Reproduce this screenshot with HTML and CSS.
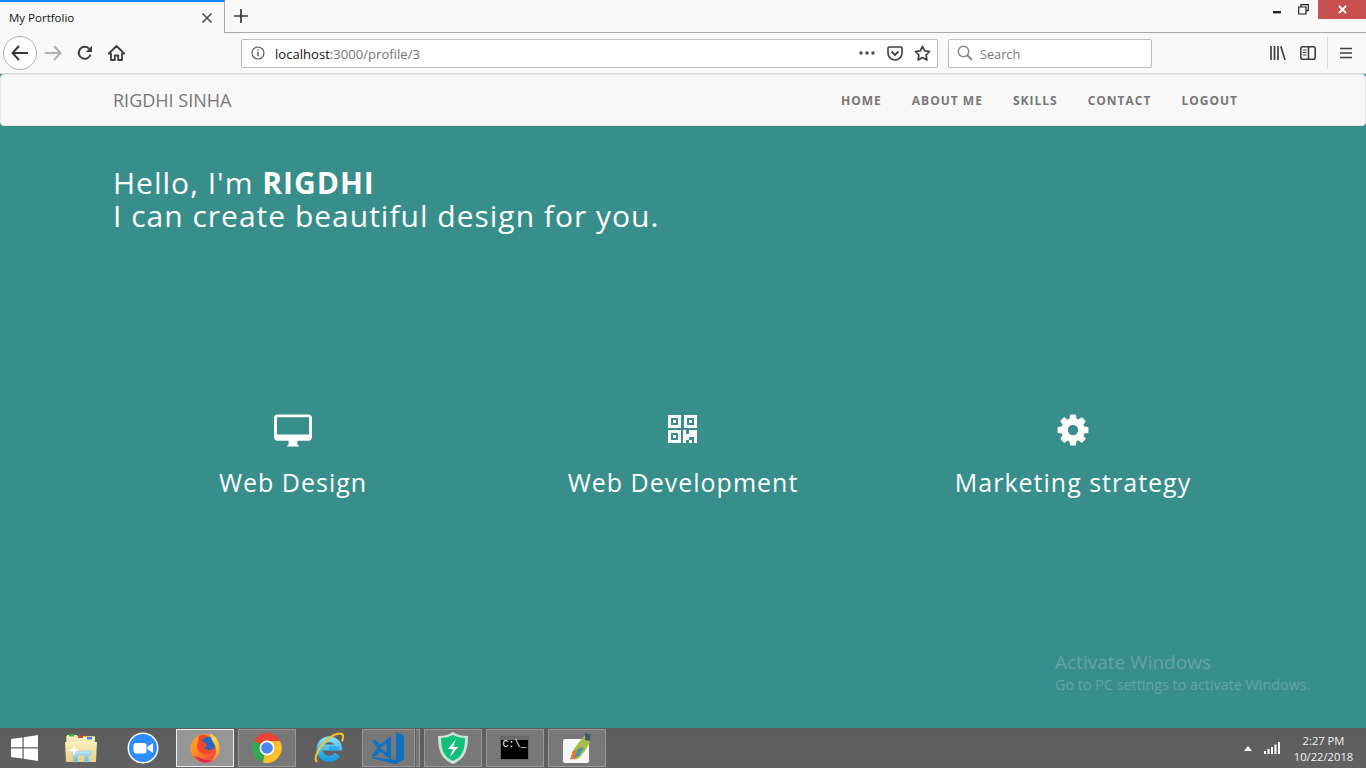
FILE: index.html
```html
<!DOCTYPE html>
<html lang="en">
<head>
  <meta charset="UTF-8" />
  <meta name="viewport" content="width=device-width, initial-scale=1.0" />
  <title>My Portfolio</title>
  <link rel="stylesheet" href="styles.css">
</head>
<body>
  <div class="browser">
    <div class="tabstrip">
      <div class="tab">
        <span class="tab-title">My Portfolio</span>
        <svg class="tab-close" width="12" height="12" viewBox="0 0 12 12"><path d="M1.5 1.5l9 9M10.5 1.5l-9 9" stroke="#4a4a4f" stroke-width="1.6"/></svg>
      </div>
      <div class="newtab">
        <svg width="14" height="14" viewBox="0 0 14 14"><path d="M7 0v14M0 7h14" stroke="#38383d" stroke-width="1.7"/></svg>
      </div>
      <div class="winctl">
        <div class="winbtn"><svg width="10" height="10" viewBox="0 0 10 10"><rect x="1" y="6" width="8" height="2.4" fill="#222"/></svg></div>
        <div class="winbtn"><svg width="11" height="11" viewBox="0 0 11 11"><path d="M3 2.5V.7h7.3v6H8M.7 3h7.3v7H.7z" fill="none" stroke="#222" stroke-width="1.2"/></svg></div>
        <div class="winclose"><svg width="9" height="9" viewBox="0 0 9 9"><path d="M1 1l7 7M8 1l-7 7" stroke="#fff" stroke-width="1.8"/></svg></div>
      </div>
    </div>
    <div class="toolbar">
      <div class="back">
        <svg width="18" height="16" viewBox="0 0 18 16"><path d="M8 1L1.5 8 8 15M2 8h15" fill="none" stroke="#3a3a3e" stroke-width="2"/></svg>
      </div>
      <svg class="fwd" width="18" height="16" viewBox="0 0 18 16"><path d="M10 1l6.500 7-6.500 7M16 8H1" fill="none" stroke="#b1b1b3" stroke-width="2"/></svg>
      <svg class="reload" width="16" height="16" viewBox="0 0 16 16"><path d="M13.500 9.500A6 6 0 1 1 12 3.600" fill="none" stroke="#3f3f43" stroke-width="2"/><path d="M15 .8v6.200H8.800z" fill="#3f3f43"/></svg>
      <svg class="home" width="17" height="16" viewBox="0 0 17 16"><path d="M8.500 1L.8 8.500h2.200V15h3.800v-4.500h3.400V15H14V8.500h2.200z" fill="none" stroke="#3f3f43" stroke-width="1.800" stroke-linejoin="round"/></svg>
      <div class="urlbar">
        <svg width="14" height="14" viewBox="0 0 14 14"><circle cx="7" cy="7" r="6" fill="none" stroke="#55555a" stroke-width="1.100"/><path d="M7 6v4.200M7 3.500v1.300" stroke="#55555a" stroke-width="1.400"/></svg>
        <span class="url"><span class="url-host">localhost</span>:3000/profile/3</span>
        <svg class="dots" width="16" height="4" viewBox="0 0 16 4"><circle cx="2" cy="2" r="1.700"/><circle cx="8" cy="2" r="1.700"/><circle cx="14" cy="2" r="1.700"/></svg>
        <svg class="pocket" width="16" height="15" viewBox="0 0 16 15"><path d="M1 2.300C1 1.500 1.500 1 2.300 1h11.400c.8 0 1.300.5 1.300 1.300V7c0 3.800-3.200 7-7 7s-7-3.200-7-7z" fill="none" stroke="#3f3f43" stroke-width="1.600"/><path d="M4.500 5.500L8 9l3.500-3.500" fill="none" stroke="#3f3f43" stroke-width="1.800"/></svg>
        <svg class="star" width="17" height="16" viewBox="0 0 17 16"><path d="M8.500 1.300l2.200 4.500 4.900.7-3.500 3.500.8 4.900-4.400-2.300-4.400 2.300.8-4.900L1.400 6.500l4.900-.7z" fill="none" stroke="#3f3f43" stroke-width="1.700" stroke-linejoin="round"/></svg>
      </div>
      <div class="searchbar">
        <svg width="16" height="16" viewBox="0 0 16 16"><circle cx="6.500" cy="6.500" r="5.200" fill="none" stroke="#8a8a8d" stroke-width="1.500"/><path d="M10.300 10.300L15 15" stroke="#8a8a8d" stroke-width="2"/></svg>
        <span class="search-text">Search</span>
      </div>
      <div class="tools">
        <svg width="16" height="14" viewBox="0 0 16 14"><path d="M1 0v14M4.500 0v14M8 0v14M10.800 .2l4.200 13.800" stroke="#3f3f43" stroke-width="1.700" fill="none"/></svg>
        <svg class="sidebar" width="16" height="14" viewBox="0 0 16 14"><rect x=".8" y=".8" width="14.400" height="12.400" rx="2" fill="none" stroke="#3f3f43" stroke-width="1.600"/><path d="M8.500 1v12" stroke="#3f3f43" stroke-width="1.600"/><path d="M3 4h3.500M3 6.500h3.500M3 9h3.500" stroke="#3f3f43"/></svg>
        <div class="tools-sep"></div>
        <svg width="14" height="12" viewBox="0 0 14 12"><path d="M1 1.500h12M1 6h12M1 10.500h12" stroke="#3f3f43" stroke-width="1.700"/></svg>
      </div>
    </div>
  </div>

  <nav class="navbar">
    <div class="container nav-inner">
      <a class="brand">RIGDHI SINHA</a>
      <ul class="nav-links">
        <li>Home</li>
        <li>About me</li>
        <li>Skills</li>
        <li>Contact</li>
        <li>Logout</li>
      </ul>
    </div>
  </nav>

  <main class="hero">
    <div class="container">
      <h1 class="hero-title">Hello, I'm <strong>RIGDHI</strong><br />I can create beautiful design for you.</h1>
      <div class="services">
        <div class="service">
          <div class="service-icon">
            <svg width="38" height="33" viewBox="0 1 39 33"><path fill-rule="evenodd" d="M3.500 1h32C37.400 1 39 2.600 39 4.500v20c0 1.900-1.600 3.500-3.500 3.500h-32C1.600 28 0 26.400 0 24.500v-20C0 2.600 1.600 1 3.500 1zM3 4v17.500h33V4zM15 28h9v3.500l2 2.500H13l2-2.500z" fill="#fff"/></svg>
          </div>
          <h3 class="service-name">Web Design</h3>
        </div>
        <div class="service">
          <div class="service-icon">
            <svg width="30" height="30" viewBox="0 0 30 30">
              <path fill-rule="evenodd" fill="#fff" d="M0 0h13v13H0zm3 3v7h7V3zM16 0h13v13H16zm3 3v7h7V3zM0 15h13v13H0zm3 3v7h7v-7z"/>
              <path fill="#fff" d="M5 5h3v3H5zM21 5h3v3h-3zM5 20h3v3H5zM15 15h3v13h-3zM21 15h8v10h-3v-3h-5v3h-3v-6h3zM21 25h3v3h-3zM26 25h3v3h-3z"/>
            </svg>
          </div>
          <h3 class="service-name">Web Development</h3>
        </div>
        <div class="service">
          <div class="service-icon">
            <svg width="36" height="36" viewBox="0 0 1792 1792"><path fill="#fff" fill-rule="evenodd" d="M1152 896q0-106-75-181t-181-75-181 75-75 181 75 181 181 75 181-75 75-181zm512-109v222q0 12-8 23t-20 13l-185 28q-19 54-39 91 35 50 107 138 10 12 10 25t-9 23q-27 37-99 108t-94 71q-12 0-26-9l-138-108q-44 23-91 38-16 136-29 186-7 28-36 28h-222q-14 0-24.500-8.500t-11.500-21.500l-28-184q-49-16-90-37l-141 107q-10 9-25 9-14 0-25-11-126-114-165-168-7-10-7-23 0-12 8-23 15-21 51-66.500t54-70.500q-27-50-41-99l-183-27q-13-2-21-12.500t-8-23.500v-222q0-12 8-23t19-13l186-28q14-46 39-92-40-57-107-138-10-12-10-24 0-10 9-23 26-36 98.500-107.500t94.500-71.500q13 0 26 10l138 107q44-23 91-38 16-136 29-186 7-28 36-28h222q14 0 24.500 8.500t11.500 21.500l28 184q49 16 90 37l142-107q9-9 24-9 13 0 25 10 129 119 165 170 7 8 7 22 0 12-8 23-15 21-51 66.500t-54 70.500q26 50 41 98l183 28q13 2 21 12.500t8 23.500z"/></svg>
          </div>
          <h3 class="service-name">Marketing strategy</h3>
        </div>
      </div>
    </div>
    <div class="activate">
      <div class="activate-title">Activate Windows</div>
      <div class="activate-sub">Go to PC settings to activate Windows.</div>
    </div>
  </main>

  <footer class="taskbar">
    <div class="task-start">
      <svg width="27" height="26" viewBox="0 0 27 26"><path fill="#fff" d="M0 4l11.500-1.600V12.300H0zM12.700 2.200L27 0v12.300H12.700zM0 13.600h11.500v10L0 22zM12.700 13.600H27V26l-14.300-2.200z"/></svg>
    </div>
    <div class="task-item">
      <svg width="34" height="30" viewBox="0 0 34 30">
        <defs>
          <linearGradient id="folderg" x1="0" y1="0" x2="0" y2="1"><stop offset="0" stop-color="#fbeeb8"/><stop offset="1" stop-color="#e9cf83"/></linearGradient>
          <linearGradient id="archg" x1="0" y1="0" x2="0" y2="1"><stop offset="0" stop-color="#bfe6f5"/><stop offset="1" stop-color="#63b6e0"/></linearGradient>
        </defs>
        <path d="M2 3h29v22H2z" fill="#d9bd72"/>
        <path d="M3 2h10l1 2h17v6H3z" fill="#f6eabb"/>
        <rect x="5" y="1" width="5" height="2.500" fill="#3fae49"/>
        <rect x="14" y="2.500" width="5" height="2.500" fill="#d8432e"/>
        <rect x="23" y="4" width="5" height="2.500" fill="#3a8fd8"/>
        <path d="M1 9h32l-1 20H2z" fill="url(#folderg)"/>
        <path d="M9 18h18v4h-2.500v7h-4v-7h-7v7h-4v-7H9z" fill="url(#archg)" stroke="#8ccbe8" stroke-width=".6"/>
        <path d="M10 11l1.200 5 4.800 1.200-4.800 1.200-1.200 5-1.200-5-4.800-1.200 4.800-1.200z" fill="#fff"/>
      </svg>
    </div>
    <div class="task-item">
      <svg width="32" height="32" viewBox="0 0 32 32"><circle cx="16" cy="16" r="15.500" fill="#fff"/><circle cx="16" cy="16" r="14" fill="#2d8cff"/><rect x="6.500" y="11" width="13" height="10.500" rx="2.500" fill="#fff"/><path d="M20.500 14.800l5.500-3.800v10l-5.500-3.800z" fill="#fff"/></svg>
    </div>
    <div class="task-item task-active">
      <svg width="32" height="32" viewBox="0 0 32 32">
        <defs>
          <linearGradient id="ffg" x1="0" y1="0" x2="1" y2="1"><stop offset="0" stop-color="#ffb22e"/><stop offset=".55" stop-color="#ff7a1f"/><stop offset="1" stop-color="#e0245e"/></linearGradient>
          <linearGradient id="ffy" x1="0" y1="0" x2="0" y2="1"><stop offset="0" stop-color="#ffe14a"/><stop offset="1" stop-color="#ff9a24"/></linearGradient>
        </defs>
        <circle cx="16" cy="16.500" r="14.500" fill="url(#ffg)"/>
        <circle cx="18" cy="13" r="8.500" fill="#2467c8"/>
        <path d="M9.500 4C13 2 17 2.500 19.500 4.500 16 5 13.500 7 13 9.500c2.500.5 5 2 5 4.500-1 .8-2 1.200-3 1.300 1 2 3.500 3.200 6 2.700 2.500-.5 4-2.200 4.500-4-.1 5-4.500 9-9.500 8.500-4.500-.4-8-4-8-8.500 0-2 1-4 1.500-5.500-.5-1.500-.3-3 .5-4.500z" fill="#f6472f"/>
        <path d="M21 1.500c5.500 2.200 9.500 8 9.500 15 0 7.500-6 14-14.500 14 8-1.500 12-7 11-13.500-.7-5-4.500-8-6-15.500z" fill="url(#ffy)"/>
        <path d="M5 24c3 4 7 6.500 11 6.500 3 0 6-1 8-2.500-4 1-8 .5-11-1.500z" fill="#e0245e"/>
      </svg>
    </div>
    <div class="task-item task-open">
      <svg width="32" height="32" viewBox="0 0 32 32">
        <circle cx="16" cy="16" r="15" fill="#ea4335"/>
        <path d="M16 16L3 8.500A15 15 0 0 0 12 30.500z" fill="#34a853"/>
        <path d="M16 9h13a15 15 0 0 1-17 21.500z" fill="#fbc02d"/>
        <circle cx="16" cy="16" r="7.500" fill="#fff"/>
        <circle cx="16" cy="16" r="5.800" fill="#4a85ec"/>
      </svg>
    </div>
    <div class="task-item">
      <svg width="32" height="32" viewBox="0 0 32 32">
        <defs><linearGradient id="ieg" x1="0" y1="0" x2="0" y2="1"><stop offset="0" stop-color="#7fdcf8"/><stop offset="1" stop-color="#1c9be0"/></linearGradient></defs>
        <path d="M24.500 22.500A9.800 9.800 0 1 1 26 15.500H8" fill="none" stroke="url(#ieg)" stroke-width="6"/>
        <path d="M16 16.500h9.500" stroke="#2aa9e8" stroke-width="4"/>
        <path d="M4 30C-2 24 14 3 26 1.500c5-.5 5 4 3 8" fill="none" stroke="#f2c52a" stroke-width="2"/>
      </svg>
    </div>
    <div class="task-item task-open task-stack">
      <svg width="33" height="32" viewBox="0 0 33 32"><path fill="#0e72c4" d="M24 0l8 3.500v24L24 32 0 26.500V25l24 3V3zM0 9l2.500-1.500 6 4.700L19 4v24l-10.500-8-6 4.700L0 23.500l5.500-7.300zM8.500 16l6 4.800v-9.600z" fill-rule="evenodd"/></svg>
    </div>
    <div class="task-sliver"></div>
    <div class="task-item task-open">
      <svg width="30" height="32" viewBox="0 0 30 32"><path d="M15 0c5 3 9 4 15 4 0 14-3 23-15 28C3 27 0 18 0 4c6 0 10-1 15-4z" fill="#cfe0d8"/><path d="M15 3c4 2 8 3 12 3 0 12-3 19-12 23C6 25 3 18 3 6c4 0 8-1 12-3z" fill="#12bf79"/><path d="M18 7l-8 10h5l-3 8 8-10h-5z" fill="#fff"/></svg>
    </div>
    <div class="task-item task-open">
      <div class="cmd-icon">
        <div class="cmd-title"></div>
        <span class="cmd-text">C:\_</span>
      </div>
    </div>
    <div class="task-item task-open">
      <svg width="30" height="32" viewBox="0 0 30 32">
        <rect x="1" y="7" width="26" height="24" rx="2" fill="#f7f7f5"/>
        <path d="M12 27c-3-3-2-7 0-10l6-8 7-8 4 1-1 8-5 9-6 7c-2 1-3 2-5 1z" fill="#a9b94a"/>
        <path d="M23 1l6 1-1 7-5-1z" fill="#3b5a6b"/>
        <path d="M11 19l5-1-3 9-5 0z" fill="#e8762c"/>
        <path d="M16 17l6-2-5 9-5 2z" fill="#3f93b8"/>
      </svg>
    </div>
    <div class="tray">
      <svg class="tray-arrow" width="8" height="5" viewBox="0 0 8 5"><path d="M4 0l4 5H0z" fill="#fff"/></svg>
      <svg class="tray-net" width="16" height="12" viewBox="0 0 16 12"><path fill="#fff" d="M0 9h2v3H0zM3.500 7h2v5h-2zM7 5h2v7H7zM10.500 2.500h2V12h-2zM14 0h2v12h-2z"/></svg>
      <div class="clock">
        <div>2:27 PM</div>
        <div>10/22/2018</div>
      </div>
    </div>
  </footer>
</body>
</html>
```

FILE: styles.css
```css
* {
  box-sizing: border-box;
}
html, body {
  height: 100%;
}
body {
  margin: 0;
  width: 1366px;
  height: 768px;
  overflow: hidden;
  display: flex;
  flex-direction: column;
  font-family: "Open Sans", Arial, sans-serif;
  background-color: #388e8b;
}

/* browser chrome */
.browser {
  height: 74px;
  flex-shrink: 0;
  background-color: #f9f9fa;
}
.tabstrip {
  height: 33px;
  display: flex;
  align-items: stretch;
}
.tab {
  width: 225px;
  border-top: 2px solid #0a84ff;
  border-right: 1px solid #aaaaac;
  display: flex;
  align-items: center;
  justify-content: space-between;
  padding: 0 11px 0 9px;
}
.tab-title {
  font-size: 11.5px;
  color: #111;
}
.newtab {
  flex: 1;
  border-bottom: 1px solid #aaaaac;
  padding: 9px 0 0 9px;
}
.newtab svg {
  display: block;
}
.winctl {
  display: flex;
  align-items: flex-start;
  border-bottom: 1px solid #aaaaac;
}
.winbtn {
  width: 26px;
  height: 19px;
  display: flex;
  align-items: center;
  justify-content: center;
}
.winclose {
  width: 48px;
  height: 19px;
  margin-left: 2px;
  background-color: #c75050;
  display: flex;
  align-items: center;
  justify-content: center;
}
.toolbar {
  height: 41px;
  display: flex;
  align-items: center;
  border-bottom: 1px solid #dcdcde;
  padding: 0 13px 0 3px;
}
.back {
  width: 34px;
  height: 34px;
  border: 1px solid #b1b1b3;
  border-radius: 50%;
  background-color: #fff;
  display: flex;
  align-items: center;
  justify-content: center;
}
.fwd {
  margin-left: 7px;
}
.reload {
  margin-left: 15px;
}
.home {
  margin-left: 15px;
}
.urlbar {
  width: 697px;
  height: 29px;
  margin-left: 116px;
  background-color: #fff;
  border: 1px solid #bcbcbe;
  border-radius: 2px;
  display: flex;
  align-items: center;
  padding: 0 6px 0 9px;
}
.url {
  margin-left: 10px;
  padding-top: 1px;
  font-size: 13.1px;
  color: #737373;
  flex: 1;
}
.url-host {
  color: #111;
}
.dots {
  fill: #4a4a4f;
}
.pocket {
  margin-left: 12px;
}
.star {
  margin-left: 11px;
}
.searchbar {
  width: 204px;
  height: 29px;
  margin-left: 10px;
  background-color: #fff;
  border: 1px solid #bcbcbe;
  border-radius: 2px;
  display: flex;
  align-items: center;
  padding: 0 8px;
}
.search-text {
  margin-left: 7px;
  padding-top: 1px;
  font-size: 12.7px;
  color: #777;
}
.tools {
  flex: 1;
  display: flex;
  align-items: center;
  justify-content: flex-end;
}
.sidebar {
  margin-left: 14px;
}
.tools-sep {
  width: 1px;
  height: 32px;
  background-color: #dcdcde;
  margin: 0 11px;
}

/* page */
.container {
  width: 1170px;
  margin: 0 auto;
  padding: 0 15px;
}
.navbar {
  height: 52px;
  flex-shrink: 0;
  background-color: #f8f8f8;
  border: 1px solid #e7e7e7;
  border-radius: 4px;
}
.nav-inner {
  height: 50px;
  display: flex;
  align-items: center;
  justify-content: space-between;
}
.brand {
  font-size: 18px;
  color: #777;
}
.nav-links {
  display: flex;
  gap: 30px;
  list-style: none;
  margin: 0;
  padding: 0 15px 0 0;
}
.nav-links li {
  font-size: 12px;
  font-weight: 700;
  letter-spacing: 1px;
  text-transform: uppercase;
  color: #777;
}
.hero {
  flex: 1;
  position: relative;
  background-color: #388e8b;
  color: #fff;
}
.hero-title {
  margin: 40px 0 0;
  font-size: 30px;
  line-height: 33px;
  font-weight: 400;
  letter-spacing: 1px;
}
.services {
  display: grid;
  grid-template-columns: repeat(3, 1fr);
  margin: 180px -15px 0;
}
.service {
  display: flex;
  flex-direction: column;
  align-items: center;
}
.service-icon {
  height: 36px;
  display: flex;
  align-items: center;
  justify-content: center;
}
.service-name {
  margin: 21px 0 0;
  font-size: 25px;
  line-height: 26px;
  font-weight: 400;
  letter-spacing: 1px;
}
.activate {
  position: absolute;
  left: 1055px;
  top: 523px;
  color: #62a5a3;
}
.activate-title {
  font-size: 19px;
  line-height: 26px;
}
.activate-sub {
  font-size: 14.35px;
  line-height: 20px;
}

/* windows taskbar */
.taskbar {
  height: 40px;
  flex-shrink: 0;
  background: linear-gradient(#5c5c5c, #626262);
  display: flex;
  align-items: stretch;
  gap: 4px;
  padding-top: 1px;
  padding-bottom: 1px;
}
.task-start {
  width: 48px;
  display: flex;
  align-items: center;
  justify-content: center;
}
.task-item {
  width: 58px;
  display: flex;
  align-items: center;
  justify-content: center;
  border: 1px solid transparent;
}
.task-open {
  background-color: #787878;
  border: 1px solid #979797;
}
.task-active {
  background-color: #969696;
  border: 1px solid #f0f0f0;
}
.task-stack {
  width: 53px;
}
.task-sliver {
  width: 4px;
  margin-left: -3px;
  background-color: #787878;
  border: 1px solid #979797;
  border-left-width: 0;
}
.cmd-icon {
  width: 29px;
  height: 24px;
  margin-right: 2px;
  background: linear-gradient(#6a6a6a 3px, #000 3px);
  border: 1px solid #666;
  color: #fff;
  font-family: "Liberation Mono", monospace;
  font-size: 10px;
  line-height: 10px;
  padding-left: 2px;
}
.cmd-title {
  height: 3px;
}
.tray {
  flex: 1;
  display: flex;
  align-items: center;
  justify-content: flex-end;
  color: #f2f2f2;
}
.tray-net {
  margin-left: 12px;
}
.clock {
  width: 75px;
  margin-left: 6px;
  margin-right: 5px;
  padding-top: 2px;
  text-align: center;
  font-size: 11.2px;
  line-height: 16px;
}
```
